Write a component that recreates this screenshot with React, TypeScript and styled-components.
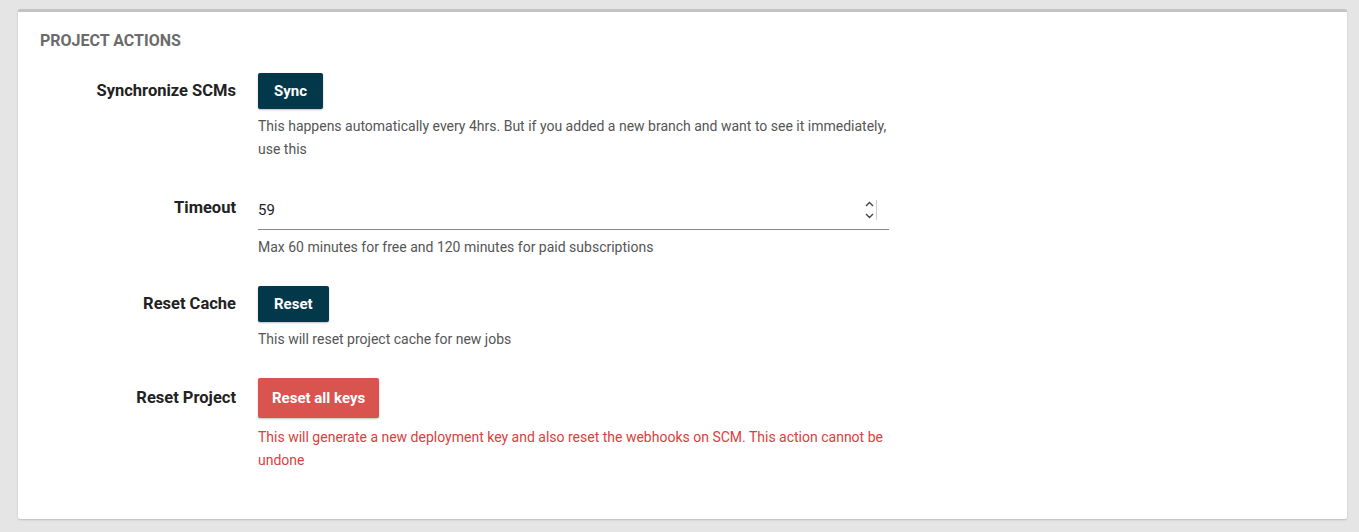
import React from 'react';
import styled, {createGlobalStyle} from 'styled-components';

const GlobalStyle = createGlobalStyle`
  html, body {
    margin: 0;
    padding: 0;
    background: #e5e5e5;
    font-family: Roboto, "Liberation Sans", sans-serif;
  }
`;

const Page = styled.div`
  padding: 9px 12px 12px 18px;
`;

const Card = styled.section`
  background: #fff;
  border-top: 3px solid #c4c4c4;
  border-radius: 2px;
  box-shadow: 0 1px 2px rgba(0, 0, 0, 0.18);
  padding: 20px 22px 34px;
  min-height: 510px;
  box-sizing: border-box;
`;

const Title = styled.h3`
  margin: 0 0 23px;
  font-size: 16px;
  font-weight: 700;
  color: #6b6b6b;
  line-height: 18px;
`;

const Rows = styled.div`
  display: flex;
  flex-direction: column;
`;

const Row = styled.div<{$gap: number}>`
  display: grid;
  grid-template-columns: 196px 631px;
  column-gap: 22px;
  align-items: start;
  margin-top: ${p => p.$gap}px;
`;

const Label = styled.label<{$h: number}>`
  text-align: right;
  font-size: 16.5px;
  font-weight: 700;
  color: #222;
  line-height: ${p => p.$h}px;
`;

const Control = styled.div`
  display: flex;
  flex-direction: column;
  align-items: flex-start;
`;

const Button = styled.button<{$danger?: boolean}>`
  font-family: inherit;
  font-size: 15px;
  font-weight: 700;
  color: #fff;
  border: none;
  border-radius: 2px;
  cursor: pointer;
  box-shadow: 0 1px 2px rgba(0, 0, 0, 0.25);
  background: ${p => (p.$danger ? '#d9534f' : '#03384a')};
  height: ${p => (p.$danger ? 40 : 36)}px;
  padding: ${p => (p.$danger ? '0 14px' : '0 16px')};
`;

const Help = styled.p<{$danger?: boolean}>`
  margin: ${p => (p.$danger ? 8 : 6)}px 0 0;
  font-size: 14px;
  line-height: 23px;
  color: ${p => (p.$danger ? '#d9413d' : '#555')};
`;

const Field = styled.div`
  display: flex;
  align-items: center;
  width: 100%;
  height: 40px;
  border-bottom: 1px solid #8a8a8a;
  box-sizing: border-box;
`;

const NumberInput = styled.input`
  flex: 1;
  border: none;
  outline: none;
  font-family: inherit;
  font-size: 15px;
  color: #222;
  padding: 0;
  background: transparent;
`;

const SpinBox = styled.span`
  display: flex;
  margin-right: 12px;
`;

const Spinner = () => (
  <SpinBox>
    <svg width="14" height="22" viewBox="0 0 14 22">
      <path d="M3 7 L6.5 3.5 L10 7" fill="none" stroke="#444" strokeWidth="1.4"/>
      <path d="M3 15 L6.5 18.5 L10 15" fill="none" stroke="#444" strokeWidth="1.4"/>
      <line x1="13.5" y1="1" x2="13.5" y2="21" stroke="#d0d0d0" strokeWidth="1"/>
    </svg>
  </SpinBox>
);

export default function App() {
  return (
    <Page>
      <GlobalStyle/>
      <Card>
        <Title>PROJECT ACTIONS</Title>
        <Rows>
          <Row $gap={0}>
            <Label $h={36}>Synchronize SCMs</Label>
            <Control>
              <Button>Sync</Button>
              <Help>
                This happens automatically every 4hrs. But if you added a new branch and want to see it immediately,
                use this
              </Help>
            </Control>
          </Row>
          <Row $gap={29}>
            <Label $h={36}>Timeout</Label>
            <Control>
              <Field>
                <NumberInput type="text" defaultValue="59"/>
                <Spinner/>
              </Field>
              <Help>Max 60 minutes for free and 120 minutes for paid subscriptions</Help>
            </Control>
          </Row>
          <Row $gap={27}>
            <Label $h={36}>Reset Cache</Label>
            <Control>
              <Button>Reset</Button>
              <Help>This will reset project cache for new jobs</Help>
            </Control>
          </Row>
          <Row $gap={27}>
            <Label $h={40}>Reset Project</Label>
            <Control>
              <Button $danger>Reset all keys</Button>
              <Help $danger>
                This will generate a new deployment key and also reset the webhooks on SCM. This action cannot be
                undone
              </Help>
            </Control>
          </Row>
        </Rows>
      </Card>
    </Page>
  );
}
